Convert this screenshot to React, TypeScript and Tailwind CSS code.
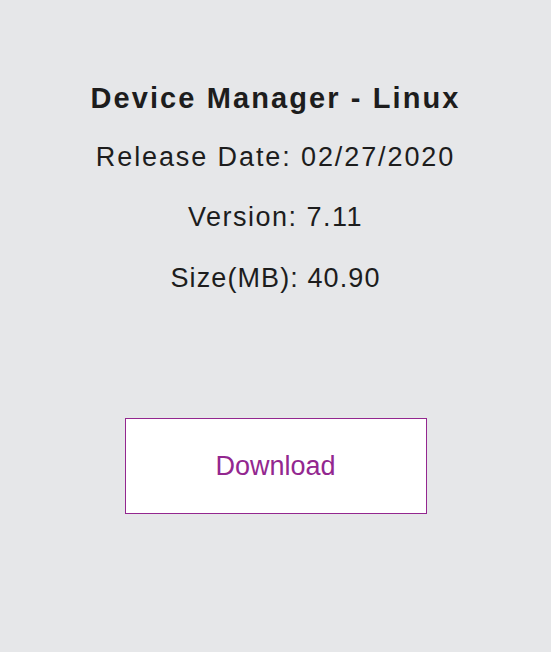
import React from "react";

function DownloadCard() {
  return (
    <div className="min-h-[652px] w-full bg-[#e6e7e9] flex flex-col items-center pt-[78px] font-['Liberation_Sans',Arial,sans-serif] text-[#1d1d1d]">
      <h1 className="text-[29px] leading-[40px] font-bold tracking-[2.1px]">Device Manager - Linux</h1>
      <p className="mt-[19px] text-[27px] leading-[40px] tracking-[1.9px]">Release Date: 02/27/2020</p>
      <p className="mt-[20px] text-[27px] leading-[40px] tracking-[1.5px]">Version: 7.11</p>
      <p className="mt-[21px] text-[27px] leading-[40px] tracking-[1.1px]">Size(MB): 40.90</p>
      <button className="mt-[120px] w-[302px] h-[96px] bg-white border border-[#93278f] text-[#93278f] text-[27px]">
        Download
      </button>
    </div>
  );
}

export default function App() {
  return <DownloadCard />;
}
